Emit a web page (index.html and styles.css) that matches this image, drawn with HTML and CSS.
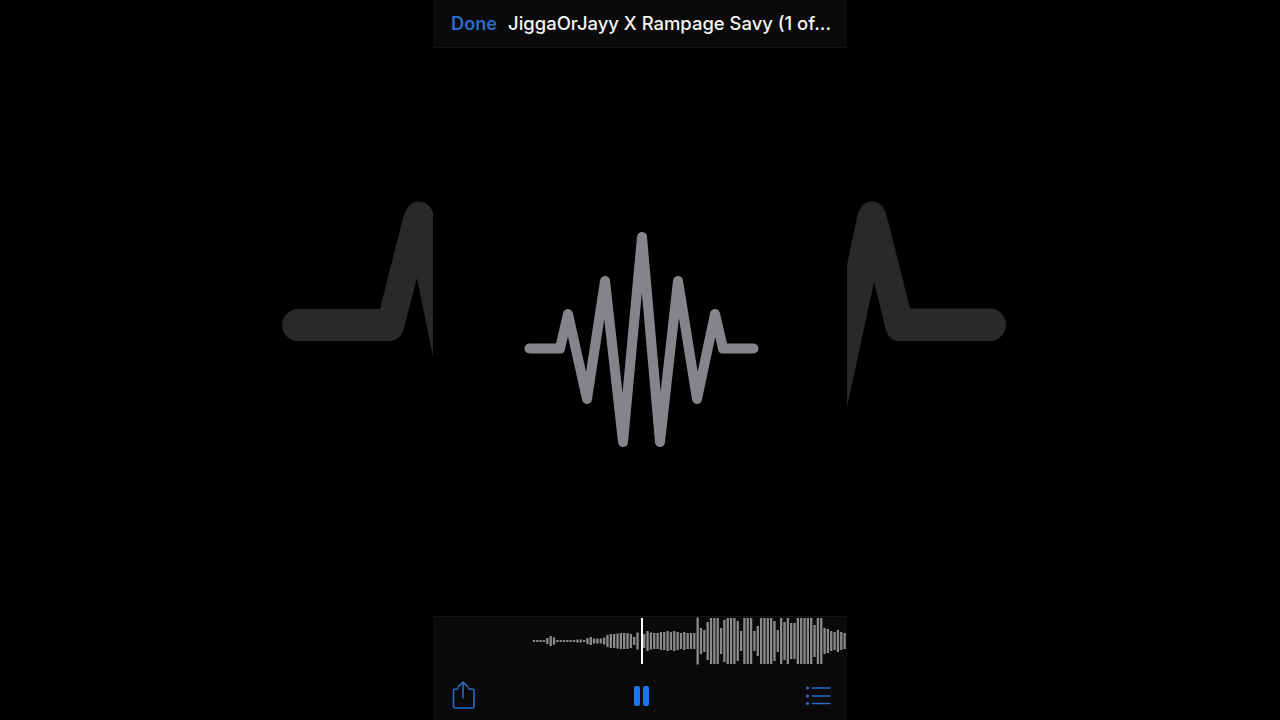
FILE: index.html
```html
<!DOCTYPE html>
<html lang="en">
<head>
<meta charset="UTF-8">
<title>Voice Memo Playback</title>
<link rel="stylesheet" href="styles.css">
</head>
<body>
<!-- big faded wave pieces on both sides of the panel -->
<svg class="backdrop" viewBox="0 0 1280 720">
    <path d="M298 309H380L403 218Q408 201.500 418 201.500Q429 201.500 433 212V357L417 278L404 328Q401 341 388 341H298A16 16 0 0 1 298 309Z"/>
    <path d="M847 265L857 217Q861 201.500 872 201.500Q883 201.500 887 217L910 308.500H991A16.300 16.300 0 0 1 991 341H898Q889 341 886 330L874 282L847 407Z"/>
</svg>

<div class="panel">
    <div class="topbar">
        <span class="done">Done</span>
        <span class="title">JiggaOrJayy X Rampage Savy (1 of...</span>
    </div>

    <div class="stage">
        <svg class="wave" viewBox="433 48 414 568">
            <polyline points="529.500,348.500 560,348.500 568,314 587,399 605,281 623,442 642,237 660,442 678,281 697,399 715,314 723,348.500 753.500,348.500"/>
        </svg>
    </div>

    <div class="player">
        <div class="timeline">
            <svg class="bars" viewBox="433 617 414 48">
                <path id="barPath"/>
            </svg>
            <div class="playhead"></div>
        </div>
        <div class="controls">
            <svg class="icon" viewBox="0 0 32 32">
                <path d="M11 9H8.500Q6.500 9 6.500 11V26Q6.500 28 8.500 28H25Q27 28 27 26V11Q27 9 25 9H21.500"/>
                <path d="M16 18V2M11 7L16 2L21 7"/>
            </svg>
            <div class="pause"><i></i><i></i></div>
            <svg class="icon" viewBox="0 0 32 32">
                <circle class="dot" cx="5.500" cy="8" r="1.600"/>
                <circle class="dot" cx="5.500" cy="16" r="1.600"/>
                <circle class="dot" cx="5.500" cy="23.500" r="1.600"/>
                <path d="M10.500 8H28M10.500 16H28M10.500 23.500H28"/>
            </svg>
        </div>
    </div>
</div>

<script>
// bar heights in px, first bar at x=534, one every 3.34px
const heights = [
    2, 2, 2, 2, 6, 10, 7, 2, 2, 2, 2, 2, 2, 3, 3, 2,
    6, 8, 5, 5, 5, 7, 12, 14, 14, 15, 16, 16, 16, 14, 8, 17,
    0, 14, 20, 17, 16, 16, 18, 18, 20, 18, 20, 18, 16, 18, 16, 16, 16,
    47, 26, 22, 38, 46, 46, 46, 26, 42, 46, 46, 46, 40, 20,
    46, 46, 46, 20, 30, 46, 46, 46, 46, 40, 22, 46, 38, 46, 36, 36,
    46, 46, 46, 46, 46, 32, 46, 46, 26, 24, 20, 18, 22, 18, 16
];

let d = '';
heights.forEach((h, i) => {
    if (h === 0) return; // playhead sits here
    const x = 534 + i * 3.34;
    d += `M${x.toFixed(2)} ${641 - h / 2}V${641 + h / 2}`;
});
document.getElementById('barPath').setAttribute('d', d);
</script>
</body>
</html>
```

FILE: styles.css
```css
* {
    box-sizing: border-box;
}

body {
    margin: 0;
    height: 100vh;
    background: #000;
    display: flex;
    justify-content: center;
    overflow: hidden;
    font-family: Inter, "Liberation Sans", sans-serif;
}

.backdrop {
    position: absolute;
    left: 0;
    top: 0;
    width: 1280px;
    height: 720px;
}

.backdrop path {
    fill: #29292a;
}

.panel {
    position: relative;
    width: 414px;
    height: 720px;
    background: #000;
    display: flex;
    flex-direction: column;
}

.topbar {
    height: 48px;
    background: #0a0a0a;
    border-bottom: 1px solid #151515;
    padding: 0 0 1px 18px;
    display: flex;
    align-items: center;
    gap: 11px;
    white-space: nowrap;
}

.done {
    color: #2b6cc9;
    font-size: 18.200px;
    font-weight: 600;
}

.title {
    color: #f4f4f4;
    font-size: 18.450px;
    font-weight: 500;
}

.stage {
    flex: 1;
    min-height: 0;
}

.wave {
    display: block;
    width: 100%;
    height: 100%;
}

.wave polyline {
    fill: none;
    stroke: #85848a;
    stroke-width: 10;
    stroke-linecap: round;
    stroke-linejoin: round;
}

.player {
    height: 104px;
    background: #0a0a0a;
    border-top: 1px solid #161616;
}

.timeline {
    position: relative;
    height: 48px;
}

.bars {
    display: block;
    width: 100%;
    height: 100%;
}

.bars path {
    stroke: #8b8b8b;
    stroke-width: 2.300;
    fill: none;
}

.playhead {
    position: absolute;
    left: 208px;
    top: 1px;
    width: 2px;
    height: 46px;
    background: #fff;
}

.controls {
    display: flex;
    align-items: center;
    justify-content: space-between;
    height: 55px;
    padding: 7px 13px 0 14px;
}

.icon {
    width: 32px;
    height: 32px;
}

.icon path {
    fill: none;
    stroke: #2a6cc8;
    stroke-width: 1.600;
    stroke-linecap: round;
    stroke-linejoin: round;
}

.icon .dot {
    fill: #2a6cc8;
}

.pause {
    display: flex;
    gap: 3px;
    margin-left: 1px;
}

.pause i {
    width: 6px;
    height: 20px;
    border-radius: 2px;
    background: #1a78ec;
}
```
